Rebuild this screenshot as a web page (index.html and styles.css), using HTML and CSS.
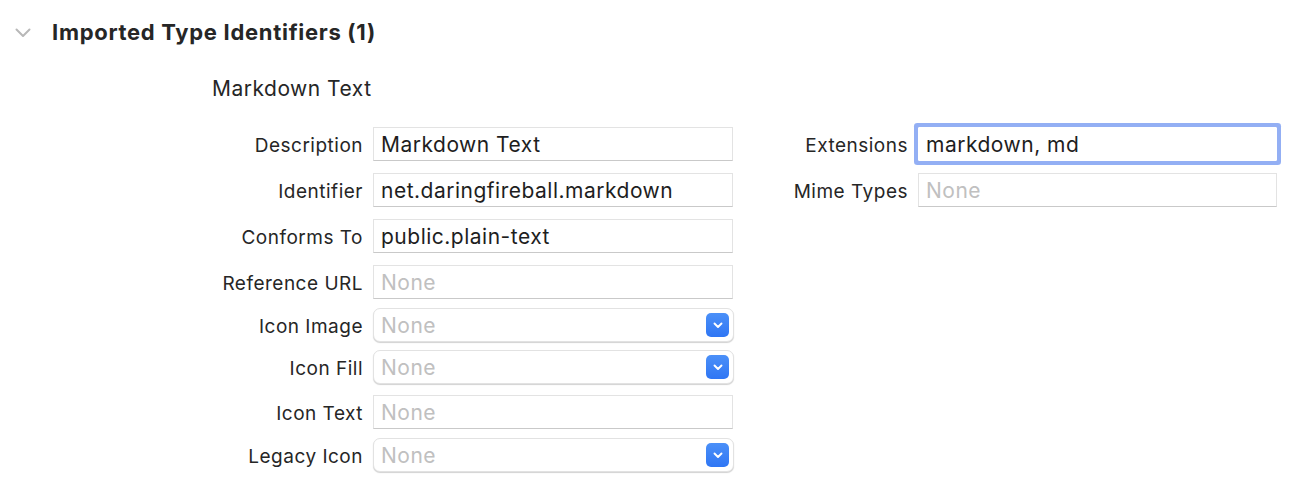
FILE: index.html
```html
<!DOCTYPE html>
<html>
<head>
<meta charset="utf-8">
<link rel="stylesheet" href="styles.css">
</head>
<body>
<div class="section-head">
  <svg class="disclosure" width="16" height="10" viewBox="0 0 16 10"><path d="M1.5 1.5 L8 8 L14.5 1.5" fill="none" stroke="#b8b8b8" stroke-width="2" stroke-linecap="round" stroke-linejoin="round"/></svg>
  <h1 class="title">Imported Type Identifiers (1)</h1>
</div>
<div class="item-name">Markdown Text</div>
<div class="form">
  <div class="col col-left">
    <div class="row">
      <label class="lbl">Description</label>
      <div class="field">Markdown Text</div>
    </div>
    <div class="row gap12">
      <label class="lbl">Identifier</label>
      <div class="field">net.daringfireball.markdown</div>
    </div>
    <div class="row gap12">
      <label class="lbl">Conforms To</label>
      <div class="field">public.plain-text</div>
    </div>
    <div class="row gap12">
      <label class="lbl">Reference URL</label>
      <div class="field placeholder">None</div>
    </div>
    <div class="row gap9">
      <label class="lbl">Icon Image</label>
      <div class="popup placeholder">None<span class="pbtn"><svg width="10" height="7" viewBox="0 0 10 7"><path d="M1.5 1.5 L5 5 L8.5 1.5" fill="none" stroke="#fff" stroke-width="1.9" stroke-linecap="round" stroke-linejoin="round"/></svg></span></div>
    </div>
    <div class="row gap8">
      <label class="lbl">Icon Fill</label>
      <div class="popup placeholder">None<span class="pbtn"><svg width="10" height="7" viewBox="0 0 10 7"><path d="M1.5 1.5 L5 5 L8.5 1.5" fill="none" stroke="#fff" stroke-width="1.9" stroke-linecap="round" stroke-linejoin="round"/></svg></span></div>
    </div>
    <div class="row gap11">
      <label class="lbl">Icon Text</label>
      <div class="field placeholder">None</div>
    </div>
    <div class="row gap9">
      <label class="lbl">Legacy Icon</label>
      <div class="popup placeholder">None<span class="pbtn"><svg width="10" height="7" viewBox="0 0 10 7"><path d="M1.5 1.5 L5 5 L8.5 1.5" fill="none" stroke="#fff" stroke-width="1.9" stroke-linecap="round" stroke-linejoin="round"/></svg></span></div>
    </div>
  </div>
  <div class="col col-right">
    <div class="row">
      <label class="lbl lbl-right">Extensions</label>
      <div class="field field-right focused">markdown, md</div>
    </div>
    <div class="row gap12">
      <label class="lbl lbl-right">Mime Types</label>
      <div class="field field-right placeholder">None</div>
    </div>
  </div>
</div>
</body>
</html>
```

FILE: styles.css
```css
html, body {
  margin: 0;
  padding: 0;
  background: #ffffff;
}
body {
  width: 1293px;
  height: 485px;
  overflow: hidden;
  font-family: Inter, "Liberation Sans", sans-serif;
  color: #262626;
}
.section-head {
  display: flex;
  align-items: center;
  height: 30px;
  padding-top: 17px;
}
.disclosure {
  margin-left: 15px;
  margin-right: 21px;
  margin-top: 2px;
}
.title {
  margin: 0;
  font-size: 22px;
  font-weight: 700;
  letter-spacing: 0.7px;
  color: #262626;
}
.item-name {
  margin-top: 30px;
  margin-left: 212px;
  font-size: 21px;
  letter-spacing: 0.5px;
  height: 24px;
  line-height: 24px;
  color: #262626;
}
.form {
  display: flex;
  margin-top: 26px;
  margin-left: 200px;
}
.col {
  display: flex;
  flex-direction: column;
}
.row {
  display: flex;
  align-items: center;
  gap: 10px;
}
.gap12 { margin-top: 12px; }
.gap11 { margin-top: 11px; }
.gap9 { margin-top: 9px; }
.gap8 { margin-top: 8px; }
.lbl {
  width: 163px;
  text-align: right;
  font-size: 19px;
  letter-spacing: 0.5px;
  color: #262626;
  white-space: nowrap;
  padding-top: 3px;
}
.lbl-right {
  width: 164px;
}
.col-right {
  margin-left: 10px;
}
.field {
  box-sizing: border-box;
  width: 360px;
  height: 34px;
  border: 1px solid #e3e3e3;
  border-bottom-color: #c9c9c9;
  background: #fff;
  padding-left: 7px;
  padding-top: 2px;
  font-size: 21px;
  letter-spacing: 0.5px;
  line-height: 30px;
  color: #1e1e1e;
  white-space: nowrap;
}
.field-right {
  width: 359px;
}
.focused {
  border-color: #ffffff;
  border-radius: 1px;
  box-shadow: 0 0 0 4px #93aff4;
}
.placeholder {
  color: #c0c0c0;
}
.popup {
  box-sizing: border-box;
  position: relative;
  width: 361px;
  height: 34px;
  border: 1px solid #e2e2e2;
  border-radius: 7px;
  background: #fff;
  box-shadow: 0 1px 1px rgba(0, 0, 0, 0.18);
  padding-left: 7px;
  padding-top: 2px;
  font-size: 21px;
  letter-spacing: 0.5px;
  line-height: 30px;
}
.pbtn {
  position: absolute;
  right: 4px;
  top: 4px;
  width: 23px;
  height: 24px;
  border-radius: 5px;
  background: linear-gradient(#4b90f8, #2f76f4);
  display: flex;
  align-items: center;
  justify-content: center;
}
```
